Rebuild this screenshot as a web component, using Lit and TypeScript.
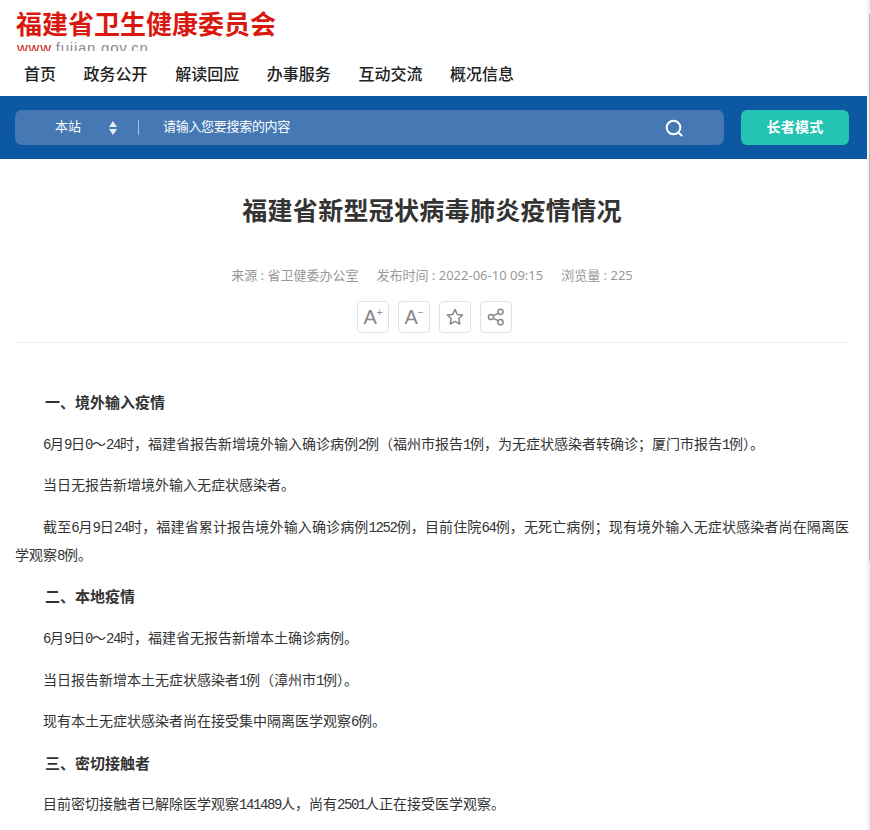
import { LitElement, html, css } from 'lit'
import { customElement } from 'lit/decorators.js'

const NAV = ['首页', '政务公开', '解读回应', '办事服务', '互动交流', '概况信息']

const ARTICLE = [
    { head: true, text: '一、境外输入疫情' },
    { text: '6月9日0～24时，福建省报告新增境外输入确诊病例2例（福州市报告1例，为无症状感染者转确诊；厦门市报告1例）。' },
    { text: '当日无报告新增境外输入无症状感染者。' },
    { text: '截至6月9日24时，福建省累计报告境外输入确诊病例1252例，目前住院64例，无死亡病例；现有境外输入无症状感染者尚在隔离医学观察8例。' },
    { head: true, text: '二、本地疫情' },
    { text: '6月9日0～24时，福建省无报告新增本土确诊病例。' },
    { text: '当日报告新增本土无症状感染者1例（漳州市1例）。' },
    { text: '现有本土无症状感染者尚在接受集中隔离医学观察6例。' },
    { head: true, text: '三、密切接触者' },
    { text: '目前密切接触者已解除医学观察141489人，尚有2501人正在接受医学观察。' }
]

@customElement('app-root')
export class AppRoot extends LitElement {
    static styles = css`
        :host {
            display: flex;
            height: 830px;
            overflow: hidden;
            background: #fff;
            font-family: "Noto Sans CJK SC", "Liberation Sans", sans-serif;
            color: #333;
        }

        .page {
            flex: 1;
            min-width: 0;
        }

        .scrollbar {
            position: relative;
            width: 3px;
            background: #f1f1f1;
        }

        .scrollbar::after {
            content: "";
            position: absolute;
            top: 14px;
            right: 0;
            width: 1px;
            height: 547px;
            background: #bcbcbc;
        }

        .top {
            height: 96px;
            padding: 8px 0 0 16px;
            box-sizing: border-box;
        }

        .logo {
            height: 43px;
            overflow: hidden;
        }

        .logo-name {
            font-size: 26px;
            line-height: 30px;
            font-weight: 700;
            color: #d9190f;
        }

        .logo-url {
            font-family: "Liberation Sans", sans-serif;
            font-size: 15px;
            line-height: 16px;
            letter-spacing: 0.75px;
            color: #8b8b8b;
            margin-top: 2px;
            padding-left: 1px;
        }

        .logo-url span {
            color: #c9201a;
        }

        nav {
            display: flex;
            gap: 27.6px;
            margin: 10px 0 0 8px;
            font-size: 16px;
            line-height: 24px;
            font-weight: 500;
            color: #222;
        }

        .band {
            height: 63px;
            background: #0d58a2;
            padding: 14px 18px 14px 15px;
            box-sizing: border-box;
            display: flex;
            gap: 17px;
        }

        .search {
            flex: 1;
            height: 35px;
            border-radius: 7px;
            background: #4679b3;
            color: #fff;
            font-size: 13px;
            line-height: 18px;
            display: flex;
            align-items: center;
        }

        .scope {
            margin-left: 40px;
            width: 53px;
            padding-bottom: 3px;
        }

        .updown {
            display: block;
            width: 10px;
            height: 16px;
        }

        .sep {
            width: 1px;
            height: 15px;
            background: #a9c1dc;
            margin: 0 24px 0 20px;
        }

        .hint {
            flex: 1;
            letter-spacing: -0.3px;
            padding-bottom: 3px;
        }

        .glass {
            display: block;
            width: 20px;
            height: 20px;
            margin-right: 40px;
        }

        .elder {
            width: 108px;
            height: 35px;
            border-radius: 6px;
            background: #25c3b3;
            color: #fff;
            font-size: 14px;
            line-height: 18px;
            letter-spacing: 0.3px;
            font-weight: 700;
            padding-bottom: 3px;
            box-sizing: border-box;
            display: flex;
            align-items: center;
            justify-content: center;
        }

        .main {
            margin: 0 18px 0 15px;
        }

        h1 {
            margin: 0;
            padding-top: 29px;
            font-size: 25px;
            line-height: 42px;
            letter-spacing: 0.3px;
            font-weight: 700;
            text-align: center;
            color: #333;
        }

        .meta {
            display: flex;
            justify-content: center;
            gap: 18px;
            margin-top: 35px;
            font-size: 13px;
            line-height: 20px;
            color: #999;
            font-family: "Noto Sans", "Noto Sans CJK SC", sans-serif;
        }

        .tools {
            display: flex;
            justify-content: center;
            gap: 9px;
            margin-top: 16px;
            padding: 0 0 9px 5px;
            border-bottom: 1px solid #eee;
        }

        .tool {
            width: 32px;
            height: 32px;
            box-sizing: border-box;
            border: 1px solid #e3e3e3;
            border-radius: 4px;
            color: #888;
            font-family: "Liberation Sans", sans-serif;
            font-size: 20px;
            display: flex;
            align-items: center;
            justify-content: center;
        }

        .tool sup {
            font-size: 10px;
            line-height: 1;
            align-self: flex-start;
            margin-top: 6px;
        }

        .tool svg {
            display: block;
            width: 20px;
            height: 20px;
        }

        article {
            padding-top: 44px;
        }

        p {
            margin: 0 0 13.6px;
            font-size: 14px;
            line-height: 28px;
            text-indent: 2em;
            text-align: justify;
            color: #333;
        }

        p.head {
            font-size: 15px;
            line-height: 30px;
            margin-bottom: 11.6px;
            font-weight: 700;
        }

        .num {
            font-family: "Liberation Mono", monospace;
            font-size: 14px;
            line-height: 0;
            letter-spacing: -1.4px;
        }
    `

    renderText(text: string) {
        return text.split(/(\d+)/).map((part, i) =>
            i % 2 ? html`<span class="num">${part}</span>` : part
        )
    }

    render() {
        return html`
            <div class="page">
                <div class="top">
                    <div class="logo">
                        <div class="logo-name">福建省卫生健康委员会</div>
                        <div class="logo-url"><span>www</span>.fujian.gov.cn</div>
                    </div>
                    <nav>${NAV.map((item) => html`<span>${item}</span>`)}</nav>
                </div>
                <div class="band">
                    <div class="search">
                        <span class="scope">本站</span>
                        <svg class="updown" viewBox="0 0 10 16">
                            <path d="M5 1 9 7H1zM5 15 1 9h8z" fill="#e4ecf5"></path>
                        </svg>
                        <span class="sep"></span>
                        <span class="hint">请输入您要搜索的内容</span>
                        <svg class="glass" viewBox="0 0 20 20" fill="none" stroke="#fff" stroke-width="2" stroke-linecap="round">
                            <circle cx="9.5" cy="9.5" r="6.8"></circle>
                            <path d="M14.6 14.8 17.6 17.6"></path>
                        </svg>
                    </div>
                    <div class="elder">长者模式</div>
                </div>
                <div class="main">
                    <h1>福建省新型冠状病毒肺炎疫情情况</h1>
                    <div class="meta">
                        <span>来源 : 省卫健委办公室</span>
                        <span>发布时间 : 2022-06-10 09:15</span>
                        <span>浏览量 : 225</span>
                    </div>
                    <div class="tools">
                        <div class="tool">A<sup>+</sup></div>
                        <div class="tool">A<sup>−</sup></div>
                        <div class="tool">
                            <svg viewBox="0 0 20 20" fill="none" stroke="#888" stroke-width="1.5" stroke-linejoin="round">
                                <path d="M10 2.5 12.3 7.4 17.6 8 13.7 11.7 14.8 17 10 14.4 5.2 17 6.3 11.7 2.4 8 7.7 7.4z"></path>
                            </svg>
                        </div>
                        <div class="tool">
                            <svg viewBox="0 0 20 20" fill="none" stroke="#888" stroke-width="1.5">
                                <circle cx="14.5" cy="4.8" r="2.6"></circle>
                                <circle cx="5" cy="10" r="2.6"></circle>
                                <circle cx="14.5" cy="15.2" r="2.6"></circle>
                                <path d="M7.3 8.8 12.2 6.1M7.3 11.2 12.2 13.9"></path>
                            </svg>
                        </div>
                    </div>
                    <article>
                        ${ARTICLE.map((row) => html`
                            <p class=${row.head ? 'head' : ''}>${this.renderText(row.text)}</p>
                        `)}
                    </article>
                </div>
            </div>
            <div class="scrollbar"></div>
        `
    }
}
